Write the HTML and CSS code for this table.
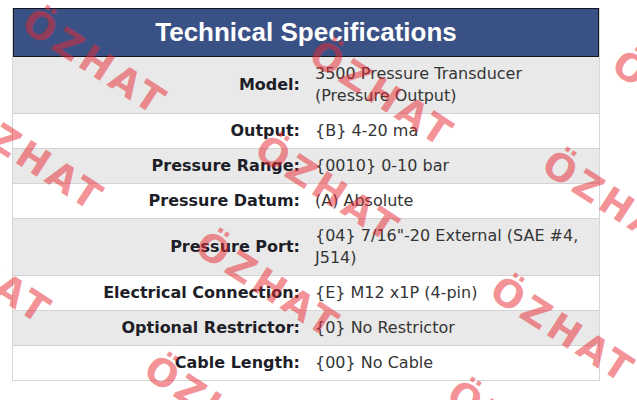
FILE: index.html
```html
<!DOCTYPE html>
<html>
<head>
<meta charset="utf-8">
<link rel="stylesheet" href="styles.css">
</head>
<body>
<div class="page">
  <div class="specs">
    <div class="specs-title">Technical Specifications</div>
    <div class="row alt"><div class="label">Model:</div><div class="value">3500 Pressure Transducer<br>(Pressure Output)</div></div>
    <div class="row"><div class="label">Output:</div><div class="value">{B} 4-20 ma</div></div>
    <div class="row alt"><div class="label">Pressure Range:</div><div class="value">{0010} 0-10 bar</div></div>
    <div class="row"><div class="label">Pressure Datum:</div><div class="value">(A) Absolute</div></div>
    <div class="row alt"><div class="label">Pressure Port:</div><div class="value">{04} 7/16"-20 External (SAE #4, J514)</div></div>
    <div class="row"><div class="label">Electrical Connection:</div><div class="value">{E} M12 x1P (4-pin)</div></div>
    <div class="row alt"><div class="label">Optional Restrictor:</div><div class="value">{0} No Restrictor</div></div>
    <div class="row"><div class="label">Cable Length:</div><div class="value">{00} No Cable</div></div>
  </div>
  <div class="wm wm-a">ÖZHAT</div>
  <div class="wm wm-b">ÖZHAT</div>
  <div class="wm wm-c">ÖZHAT</div>
  <div class="wm wm-d">ÖZHAT</div>
  <div class="wm wm-e">ÖZHAT</div>
  <div class="wm wm-f">ÖZHAT</div>
  <div class="wm wm-g">ÖZHAT</div>
  <div class="wm wm-h">ÖZHAT</div>
  <div class="wm wm-i">ÖZHAT</div>
  <div class="wm wm-j">ÖZHAT</div>
  <div class="wm wm-k">ÖZHAT</div>
  <div class="wm wm-l">ÖZHAT</div>
  <div class="wm wm-m">ÖZHAT</div>
</div>
</body>
</html>
```

FILE: styles.css
```css
html, body {
  margin: 0;
  padding: 0;
  background: #ffffff;
}
body {
  width: 637px;
  height: 400px;
  overflow: hidden;
  font-family: "DejaVu Sans", Verdana, sans-serif;
}
.page {
  position: relative;
  width: 637px;
  height: 400px;
  overflow: hidden;
  padding: 8px 0 0 12px;
  box-sizing: border-box;
}
.specs {
  width: 588px;
  box-sizing: border-box;
  border: 1px solid #d6d6d6;
  border-top: none;
}
.specs-title {
  height: 49px;
  box-sizing: border-box;
  background: #3a5185;
  border: 1px solid #15151f;
  color: #ffffff;
  font-family: "Liberation Sans", Arial, sans-serif;
  font-weight: bold;
  font-size: 26px;
  line-height: 47px;
  text-align: center;
}
.row {
  display: flex;
  background: #ffffff;
  border-bottom: 1px solid #d4d4d4;
  font-size: 16px;
  line-height: 22px;
}
.row:last-child {
  border-bottom: none;
}
.row.alt {
  background: #e9e9e9;
}
.label {
  width: 294px;
  flex: none;
  box-sizing: border-box;
  padding: 6px 7px 6px 0;
  text-align: right;
  font-weight: bold;
  color: #1e1e28;
  align-self: center;
}
.value {
  flex: 1;
  padding: 6px 8px 6px 8px;
  color: #353535;
}
.wm {
  position: absolute;
  left: 0;
  top: 0;
  font-family: "DejaVu Sans", sans-serif;
  font-weight: bold;
  font-size: 38px;
  letter-spacing: 4px;
  line-height: 1;
  color: rgba(232, 40, 48, 0.5);
  white-space: nowrap;
  pointer-events: none;
}
.wm-a { transform: translate(95px, 62px) translate(-50%, -50%) rotate(33deg); }
.wm-b { transform: translate(178px, -58px) translate(-50%, -50%) rotate(33deg); }
.wm-c { transform: translate(382px, 94px) translate(-50%, -50%) rotate(33deg); }
.wm-d { transform: translate(482px, -52px) translate(-50%, -50%) rotate(33deg); }
.wm-e { transform: translate(685px, 104px) translate(-50%, -50%) rotate(33deg); }
.wm-f { transform: translate(32px, 158px) translate(-50%, -50%) rotate(33deg); }
.wm-g { transform: translate(328px, 189px) translate(-50%, -50%) rotate(33deg); }
.wm-h { transform: translate(615px, 204px) translate(-50%, -50%) rotate(33deg); }
.wm-i { transform: translate(-20px, 271px) translate(-50%, -50%) rotate(33deg); }
.wm-j { transform: translate(268px, 285px) translate(-50%, -50%) rotate(33deg); }
.wm-k { transform: translate(563px, 330px) translate(-50%, -50%) rotate(33deg); }
.wm-l { transform: translate(217px, 409px) translate(-50%, -50%) rotate(33deg); }
.wm-m { transform: translate(520px, 434px) translate(-50%, -50%) rotate(33deg); }
```
